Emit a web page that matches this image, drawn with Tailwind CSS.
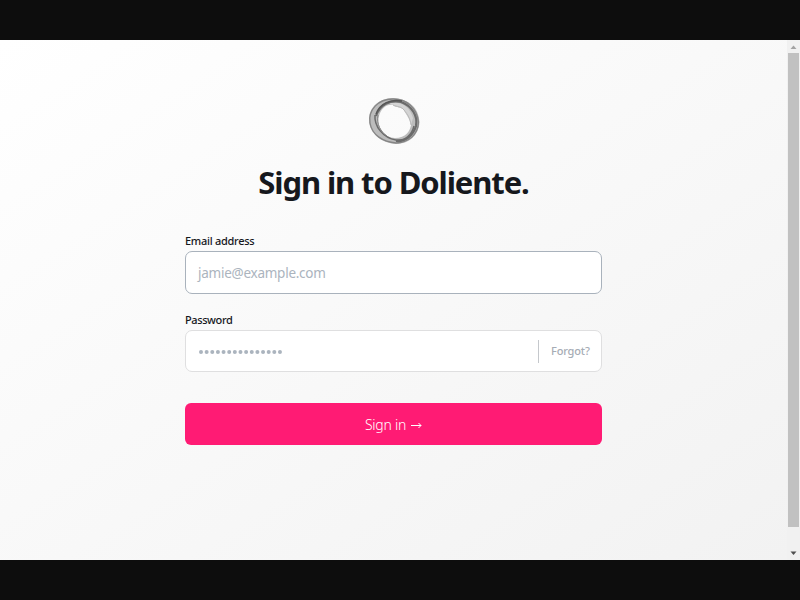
<!DOCTYPE html>
<html lang="en">
<head>
<meta charset="utf-8">
<title>Sign in to Doliente</title>
<script src="https://cdn.jsdelivr.net/npm/@tailwindcss/browser@4"></script>
</head>
<body class="flex h-[600px] w-[800px] flex-col overflow-hidden bg-[#0d0d0d] py-10 font-['Noto_Sans','Open_Sans',sans-serif]">
<div class="flex h-[520px]">
  <main class="flex w-[787px] flex-col items-center bg-linear-to-br from-white to-[#f2f2f2] pt-[57px]">
    <svg class="h-[48px] w-[54px]" viewBox="0 0 54 48" fill="none">
      <path fill="#bcbcbc" fill-rule="evenodd" d="M2 23C2 9 13 1 27 1C42 2 52 11 52.500 25C52 38 42 47 29 47C14 46 2 36 2 23ZM12 19C9 29 17 41 28 41C39 41 43 34 44 28C43 20 39 18 37 13C33 9 29 11 26 8C19 7 14 12 12 19Z"/>
      <path fill="#d4d4d4" d="M22 6C34 4 43 10 46 21L44 28C42 20 39 18 37 13C33 9 29 11 26 8Z"/>
      <path d="M3 26C1 13 11 2 26 2C40 2 50 11 51.500 25C51 38 41 46 29 46C16 45 5 38 3 26Z" stroke="#858585" stroke-width="1.300"/>
      <path d="M9 19C13 7 23 3 34 5C45 9 51 19 49 29C46 39 38 45 29 44" stroke="#6b6b6b" stroke-width="2.200"/>
      <path d="M8 18C7 29 16 41 29 43C38 44 45 38 47 29" stroke="#6b6b6b" stroke-width="1.500"/>
      <path d="M11 18C9 27 14 35 20 39" stroke="#858585"/>
      <path d="M9 17C13 6 24 2 35 4" stroke="#555" stroke-width="1.400"/>
      <path d="M26 8C30 10 34 9 37 13C41 18 43 21 44 28" stroke="#ababab" stroke-width=".7"/>
    </svg>
    <h1 class="mt-[15px] h-[46px] whitespace-nowrap text-[31px] leading-[44px] font-bold tracking-[-1.1px] text-[#16181d]">Sign in to Doliente.</h1>
    <form class="mt-[27px] flex w-[417px] flex-col">
      <label class="h-[18px] text-[11px] leading-[16px] font-medium tracking-[-0.28px] text-[#16181d]">Email address</label>
      <div class="flex h-[43px] items-center rounded-[7px] border border-[#a9b2bc] bg-white px-3 pt-0.5 text-[13.5px] tracking-[-0.25px] text-[#abb4be]">jamie@example.com</div>
      <label class="mt-[18px] h-[18px] text-[11px] leading-[16px] font-medium tracking-[-0.4px] text-[#16181d]">Password</label>
      <div class="flex h-[42px] items-center rounded-[7px] border border-[#dfdfe0] bg-white pr-[11px] pl-[13px]">
        <svg class="mt-0.5 h-1 w-[84px]" viewBox="0 0 84 4"><path d="M2 2H83" stroke="#abb4be" stroke-width="4" stroke-linecap="round" stroke-dasharray="0 5.64"/></svg>
        <span class="ml-auto h-[23px] w-px bg-[#c5c8cc]"></span>
        <span class="ml-[12px] w-[39px] text-[11px] font-medium tracking-[-0.15px] text-[#a6acb5]">Forgot?</span>
      </div>
      <div class="mt-[31px] flex h-[42px] items-center justify-center rounded-[6px] bg-[#ff1b74] text-[14px] font-light tracking-[-0.25px] text-white">
        <span>Sign in</span>
        <svg class="mt-0.5 ml-[5px] h-2 w-[11px]" viewBox="0 0 11 8" fill="none" stroke="white"><path d="M0 4.500H10M7.500 2L10 4.500L7.500 7"/></svg>
      </div>
    </form>
  </main>
  <aside class="flex w-[13px] flex-col items-center bg-[#f1f1f1]">
    <svg class="h-[13px] w-[13px]" viewBox="0 0 13 13"><path fill="#a3a3a3" d="M3.500 9L6.500 5.500L9.500 9Z"/></svg>
    <div class="h-[474px] w-[11px] bg-[#c1c1c1]"></div>
    <svg class="mt-auto h-[13px] w-[13px]" viewBox="0 0 13 13"><path fill="#505050" d="M3.500 4.500H9.500L6.500 8Z"/></svg>
  </aside>
</div>
</body>
</html>
